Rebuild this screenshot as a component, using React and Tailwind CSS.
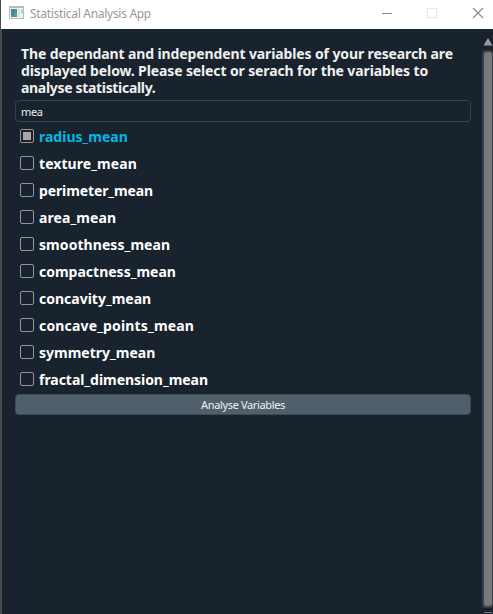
const variables = [
  { name: 'radius_mean', checked: true, tracking: 'tracking-normal' },
  { name: 'texture_mean', tracking: 'tracking-[0.07px]' },
  { name: 'perimeter_mean', tracking: 'tracking-[-0.12px]' },
  { name: 'area_mean', tracking: 'tracking-[0.1px]' },
  { name: 'smoothness_mean', tracking: 'tracking-[0.07px]' },
  { name: 'compactness_mean', tracking: 'tracking-normal' },
  { name: 'concavity_mean', tracking: 'tracking-normal' },
  { name: 'concave_points_mean', tracking: 'tracking-[0.16px]' },
  { name: 'symmetry_mean', tracking: 'tracking-normal' },
  { name: 'fractal_dimension_mean', tracking: 'tracking-[-0.04px]' },
];

function TitleBar() {
  return (
    <header className="flex h-[29px] shrink-0 items-center border-l border-[#4a4a4a] bg-white pl-[8px] pb-[3px]">
      <svg className="mb-px" width="15" height="13" viewBox="0 0 15 13" shapeRendering="crispEdges">
        <rect width="15" height="13" fill="#b4babd" />
        <rect x="1" y="2" width="13" height="10" fill="#eef2f3" />
        <rect x="2" y="3" width="6" height="8" fill="#4a8f8e" />
        <rect x="2" y="3" width="3" height="4" fill="#4d7fa0" />
        <rect x="5" y="7" width="3" height="4" fill="#4fa374" />
        <rect x="9" y="3" width="2" height="8" fill="#dbe2e6" />
        <rect x="12" y="3" width="2" height="5" fill="#c5cfd4" />
      </svg>
      <h1 className="relative top-px ml-[6px] text-[12px] tracking-[-0.3px] text-[#999999]">Statistical Analysis App</h1>
      <svg className="ml-auto" width="113" height="26" viewBox="0 0 113 26" fill="none">
        <path d="M2 13.5h10" stroke="#888888" />
        <rect x="47.5" y="8.5" width="9" height="9" stroke="#e7e7e7" />
        <path d="M93 8l10 10M103 8l-10 10" stroke="#888888" strokeWidth="1.1" />
      </svg>
    </header>
  );
}

function VariableRow({ name, checked, tracking }) {
  return (
    <label className="flex h-[27px] items-center pl-[5px]">
      <span className="flex size-[14px] shrink-0 items-center justify-center rounded-[2px] border border-[#969696]">
        {checked && <span className="size-2 bg-[#aaa6a6]" />}
      </span>
      <span className={`relative top-px ml-[5px] whitespace-nowrap ${checked ? 'text-[#00b8e6]' : 'text-white'} ${tracking}`}>
        {name}
      </span>
    </label>
  );
}

function ScrollBar() {
  return (
    <div className="flex w-[11px] shrink-0 flex-col">
      <svg className="mt-[9px]" width="11" height="8" viewBox="0 0 11 8">
        <path d="M6 0L10.5 7.5H1.5z" fill="#999999" />
      </svg>
      <div className="mt-[4px] h-[558px] rounded-t-[4px] rounded-b-[3px] border-l-2 border-r border-t-2 border-b-2 border-[#32414b] bg-[#32414b]">
        <div className="h-full rounded-[3px] bg-[#787878]" />
      </div>
      <div className="mt-[4px] ml-[2px] h-px w-2 bg-[#787878]" />
    </div>
  );
}

export default function App() {
  return (
    <div className="flex h-[614px] w-[493px] flex-col overflow-hidden bg-white font-['Noto_Sans',sans-serif]">
      <TitleBar />
      <main className="flex min-h-0 flex-1 border-l-2 border-[#4a4a4a] bg-[#19232d]">
        <div className="ml-[13px] mr-[11px] flex w-[456px] shrink-0 flex-col text-[14px] font-bold text-[#f0f0f0]">
          <p className="mt-[16px] pl-[6px] leading-[17px] tracking-[-0.12px]">
            The dependant and independent variables of your research are
            <br />
            displayed below. Please select or serach for the variables to
            <br />
            <span className="tracking-[-0.32px]">analyse statistically.</span>
          </p>
          <input
            type="text"
            defaultValue="mea"
            className="mt-[4px] h-[22px] rounded-[4px] border border-[#32414b] px-[5px] text-[11px] font-normal tracking-[-0.4px] outline-none"
          />
          <div className="flex flex-col">
            {variables.map((variable) => (
              <VariableRow key={variable.name} {...variable} />
            ))}
          </div>
          <button className="mt-[2px] h-[21px] rounded-[4px] border border-[#3b4b56] bg-[#505f69] text-[11px] leading-[19px] font-normal tracking-[-0.36px]">
            Analyse Variables
          </button>
        </div>
        <ScrollBar />
      </main>
    </div>
  );
}
